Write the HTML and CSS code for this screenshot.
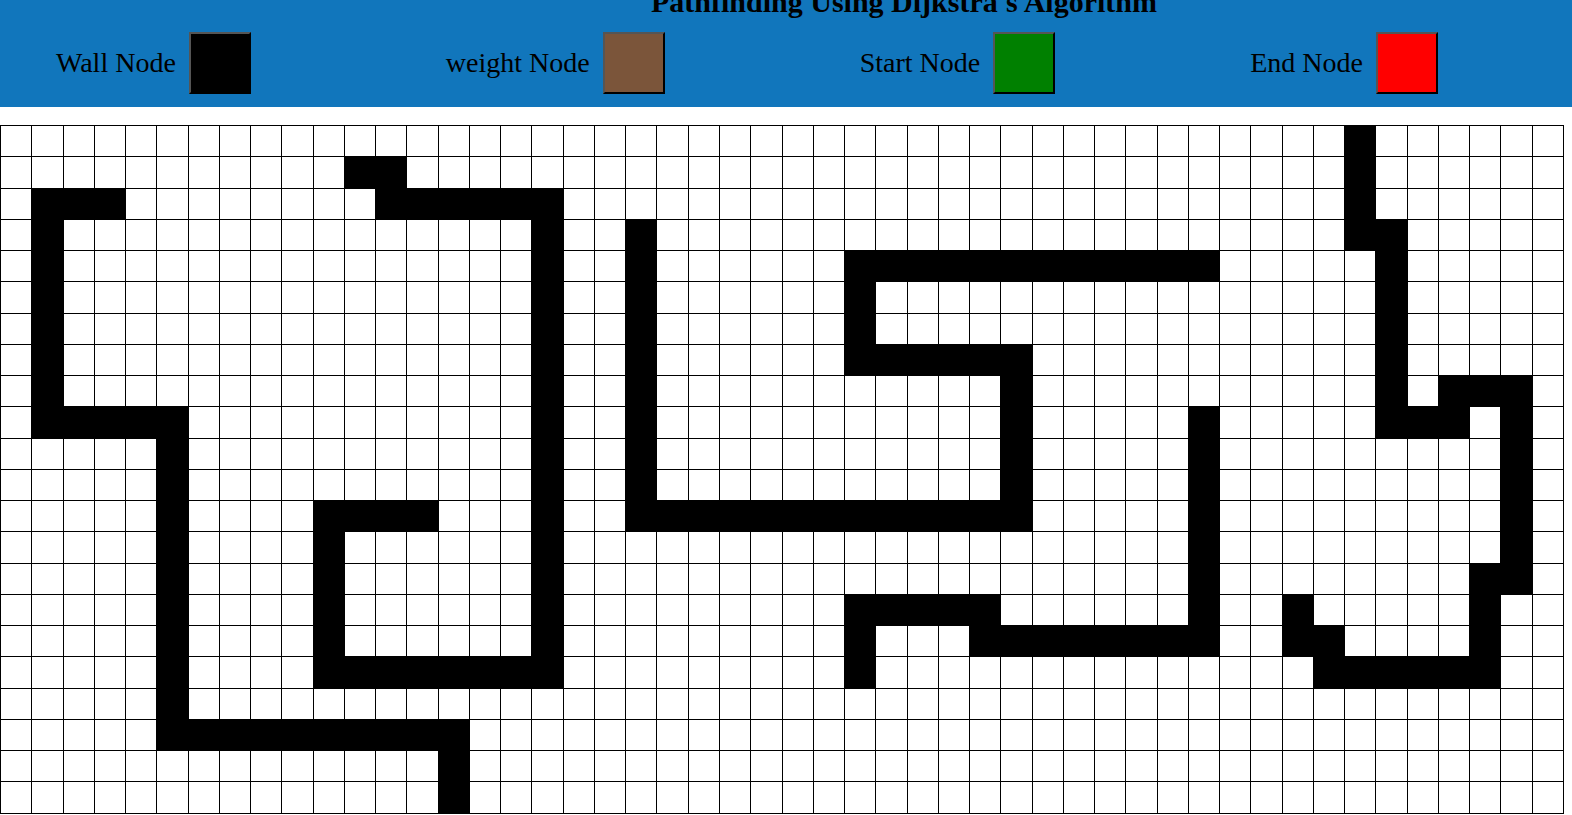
FILE: index.html
```html
<!DOCTYPE html>
<html lang="en">
<head>
<meta charset="utf-8">
<title>Pathfinding Using Dijkstra's Algorithm</title>
<link rel="stylesheet" href="styles.css">
</head>
<body>
<header class="topbar">
  <h1 class="title">Pathfinding Using Dijkstra's Algorithm</h1>
  <div class="legend">
    <div class="legend-item"><span class="legend-label">Wall Node</span><button class="swatch swatch-wall"></button></div>
    <div class="legend-item"><span class="legend-label">weight Node</span><button class="swatch swatch-weight"></button></div>
    <div class="legend-item"><span class="legend-label">Start Node</span><button class="swatch swatch-start"></button></div>
    <div class="legend-item"><span class="legend-label">End Node</span><button class="swatch swatch-end"></button></div>
  </div>
</header>
<main class="grid" id="grid"></main>
<script src="script.js"></script>
</body>
</html>
```
FILE: styles.css
```css
html, body {
  margin: 0;
  padding: 0;
  background: #ffffff;
}
body {
  font-family: "Liberation Serif", "Times New Roman", serif;
  color: #000;
}
.topbar {
  display: flex;
  flex-direction: column;
  height: 107px;
  background: #1176bc;
}
.title {
  margin: -15px 0 0 236px;
  font-size: 30px;
  line-height: 34px;
  font-weight: bold;
  text-align: center;
}
.legend {
  display: flex;
  align-items: center;
  gap: 195px;
  margin-top: 13px;
  padding-left: 56px;
}
.legend-item {
  display: flex;
  align-items: center;
  gap: 13px;
}
.legend-label {
  font-size: 28px;
}
.swatch {
  box-sizing: border-box;
  width: 62px;
  height: 62px;
  padding: 0;
  margin: 0;
  border: 2px solid;
  border-color: #555 #000 #000 #555;
}
.swatch-wall { background: #000; }
.swatch-weight { background: #7b553a; }
.swatch-start { background: #008000; }
.swatch-end { background: #ff0000; }
.grid {
  box-sizing: border-box;
  display: grid;
  grid-template-columns: repeat(50, 1fr);
  grid-auto-rows: 31.26px;
  width: 1564px;
  margin-top: 18px;
  border-left: 1px solid #000;
  border-top: 1px solid #000;
}
.cell {
  box-sizing: border-box;
  border-right: 1px solid #000;
  border-bottom: 1px solid #000;
  background: #fff;
}
.cell.wall {
  background: #000;
}
```
FILE: script.js
```js
(function () {
  var ROWS = 22, COLS = 50;
  var walls = {};
  function h(r, c1, c2) { for (var c = c1; c <= c2; c++) walls[r * COLS + c] = true; }
  function v(c, r1, r2) { for (var r = r1; r <= r2; r++) walls[r * COLS + c] = true; }

  // left shape
  h(2, 1, 3); v(1, 2, 9); h(9, 1, 5); v(5, 9, 19); h(19, 5, 14); v(14, 19, 21);
  // box shape
  h(1, 11, 12); h(2, 12, 17); v(17, 2, 17); h(17, 10, 17); v(10, 12, 17); h(12, 10, 13);
  // middle S shape
  v(20, 3, 12); h(12, 20, 32); v(32, 7, 12); h(7, 27, 32); v(27, 4, 7); h(4, 27, 38);
  // lower middle
  h(15, 27, 31); v(27, 15, 17); h(16, 31, 38); v(38, 9, 16);
  // right shape
  v(43, 0, 3); h(3, 43, 44); v(44, 3, 9); h(9, 44, 46); v(46, 8, 9); h(8, 46, 48);
  v(48, 8, 14); h(14, 47, 48); v(47, 14, 17); h(17, 42, 47); v(41, 15, 16); h(16, 41, 42);

  var grid = document.getElementById('grid');
  var frag = document.createDocumentFragment();
  for (var r = 0; r < ROWS; r++) {
    for (var c = 0; c < COLS; c++) {
      var d = document.createElement('div');
      d.className = walls[r * COLS + c] ? 'cell wall' : 'cell';
      frag.appendChild(d);
    }
  }
  grid.appendChild(frag);
})();
```
